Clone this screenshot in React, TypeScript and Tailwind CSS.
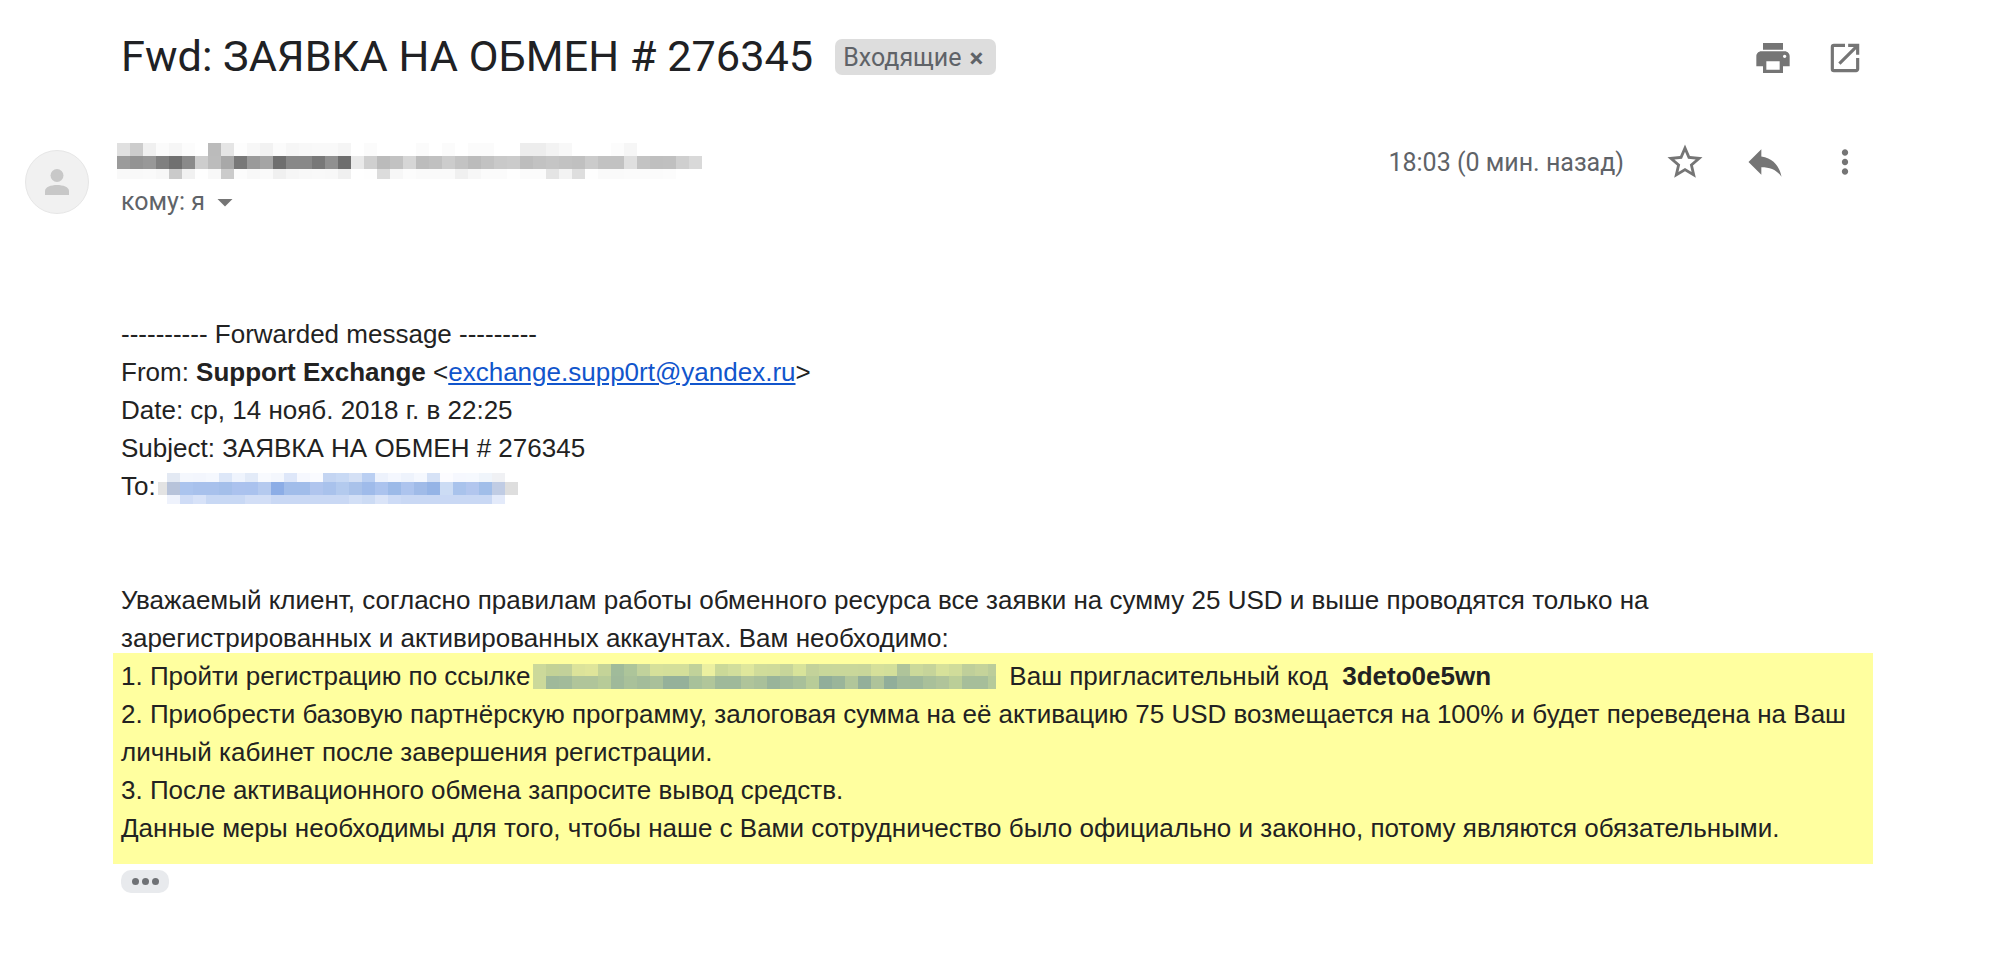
import React from 'react';
import { MdPrint, MdOpenInNew, MdStarBorder, MdReply, MdMoreVert, MdArrowDropDown } from 'react-icons/md';

type PixelRow = { x: number; y: number; h: number; first?: number; colors: string[] };

// mosaic blocks used to hide the addresses in the screenshot
const Mosaic: React.FC<{ w: number; h: number; rows: PixelRow[]; className: string }> = ({ w, h, rows, className }) => (
  <svg width={w} height={h} viewBox={`0 0 ${w} ${h}`} shapeRendering="crispEdges" className={className}>
    {rows.map((row, r) =>
      row.colors.map((c, i) => {
        const first = row.first ?? 13;
        const x = i === 0 ? row.x : row.x + first + (i - 1) * 13;
        return <rect key={`${r}-${i}`} x={x} y={row.y} width={i === 0 ? first : 13} height={row.h} fill={c} />;
      })
    )}
  </svg>
);

const grey = (list: string) => list.split(',').map(v => `#${v}${v}${v}`);

const senderRows: PixelRow[] = [
  { x: 0, y: 0, h: 13, colors: grey('e0,cc,f0,fb,f6,fc,ff,bb,e5,fd,f7,f2,fb,f6,f8,f9,f9,f5,ff,fb,ff,ff,ff,fb,ff,fb,ff,fb,fb,ff,ff,ed,ed,f3,f8,ff,ff,ff,fc,f6,ff,ff,ff,ff') },
  { x: 0, y: 13, h: 13, colors: grey('9b,93,98,80,70,8a,cd,bc,a8,78,9a,a5,6f,88,88,78,90,6e,e9,cf,bb,c2,d6,bc,c0,cc,c3,bb,c2,c9,cb,bd,c2,c5,c2,c0,cb,c2,c2,df,c3,bf,c0,cf,d9') },
  { x: 0, y: 26, h: 10, colors: grey('f9,f9,fa,f7,ca,f1,fe,f8,cb,fc,f8,fa,f0,f6,f8,f9,f8,f0,ff,fe,dc,f7,fc,fa,fa,fa,f0,f7,fb,fb,fe,fb,fb,e4,f3,de,fe,fa,fa,fb,fb,fb,fc,ff') },
];

const toRows: PixelRow[] = [
  { x: 9, y: 0, h: 9, colors: ['#e3e9f3', '#f4f7fd', '#f3f6fd', '#f5f8fe', '#dde7f8', '#eff4fd', '#e3ebf8', '#f8fafe', '#f4f7fd', '#dee7f9', '#f6f8fe', '#fafbff', '#c4d5f2', '#c8d9f4', '#d4e0f5', '#bacff2', '#edf2fc', '#f4f7fe', '#eef3fc', '#f5f8fe', '#d6e2f6', '#fcfcff', '#f6f8fe', '#f6f9fe', '#f0f5fb', '#f0f1f4'] },
  { x: 0, y: 9, h: 13, first: 9, colors: ['#e3e3e3', '#b7c3da', '#abc4ee', '#a8c1ec', '#a8c1ec', '#a4bfea', '#abc2ee', '#aac2ee', '#b5caef', '#8cade6', '#a1bdea', '#a1bdea', '#b0c5ee', '#a9c2ec', '#b3caee', '#a9c2ea', '#9fbbea', '#abc3ee', '#9cbae8', '#adc4ee', '#a0bbe8', '#95b4e6', '#ccdcf4', '#a9c3ec', '#b2c6ee', '#a1bee9', '#c0cce4', '#dedede'] },
  { x: 9, y: 22, h: 9, colors: ['#eef2fc', '#cfdcf6', '#d7e2f8', '#c8d8f4', '#c8d8f4', '#c8d8f4', '#d2def6', '#d2def6', '#c9d8f4', '#c9d8f4', '#c9d8f4', '#c9d8f4', '#c9d8f4', '#c9d8f4', '#d2dff6', '#ccdbf4', '#dae4f8', '#cddbf6', '#c9d8f4', '#c9d8f4', '#c9d8f4', '#c9d8f4', '#c9d8f4', '#c9d8f4', '#c9d8f4', '#e3eafa'] },
];

const linkRows: PixelRow[] = [
  { x: 0, y: 0, h: 12, colors: ['#ccd99a', '#c3d296', '#c2d19a', '#dce39a', '#dfe59a', '#c4d398', '#a0bb9a', '#adc59a', '#c1d29c', '#d6e09a', '#d4df9a', '#d4df9a', '#c1d29a', '#ecf0a0', '#cbd998', '#d2de9c', '#dfe79c', '#d0dc9a', '#cfdb9a', '#c7d59a', '#d8e39a', '#c3d29a', '#c8d79a', '#c9d79a', '#c9d79a', '#c8d69a', '#d6e09a', '#d3df9a', '#afc49a', '#cbd99a', '#c6d49a', '#d7e19a', '#d0dc9a', '#bfcf9a', '#c5d39a', '#bccd9a'] },
  { x: 0, y: 12, h: 13, colors: ['#ccd99a', '#9fb99a', '#a2bb9a', '#b0c59a', '#b0c59a', '#b7cb98', '#9fb99a', '#a9c19a', '#a3bc9a', '#a9c09a', '#95b19a', '#95b19a', '#a8c19a', '#b1c69a', '#9fb99a', '#9fb99a', '#afc49a', '#a9c09a', '#99b49a', '#a1ba9a', '#a8c09a', '#b8cc98', '#91ae9a', '#9ab59a', '#b1c69a', '#93af9a', '#aec39a', '#91ae9a', '#a0b99a', '#9eb89a', '#a9c09a', '#b0c49a', '#bbce98', '#a6be9a', '#a6be9a', '#b5ca9a'] },
];

const App: React.FC = () => {
  return (
    <div className="w-[2000px] min-h-screen bg-white text-[#222222] font-['Liberation_Sans',Arial,sans-serif]">
      {/* Subject */}
      <div className="flex items-center h-[114px] pl-[121px] pr-[115px]">
        <h1 className="text-[43.3px] leading-[56px] font-normal text-[#202124] font-['Roboto',sans-serif]">Fwd: ЗАЯВКА НА ОБМЕН # 276345</h1>
        <span className="ml-[22px] flex items-center h-[36px] w-[161px] pl-[8px] pt-[1px] rounded-[7px] bg-[#dddddd] text-[#5f6368] text-[25px] font-['Roboto',sans-serif]">
          Входящие
          <span className="ml-[8px] text-[26px] leading-none font-bold">×</span>
        </span>
        <div className="ml-auto flex items-center gap-[33px] pr-[21px] mt-[1px] text-[#757575]">
          <MdPrint className="w-[40px] h-[40px]" />
          <MdOpenInNew className="w-[38px] h-[38px]" />
        </div>
      </div>

      {/* Sender */}
      <div className="flex items-start pt-[29px] h-[201px]">
        <div className="ml-[25px] mt-[7px] w-[64px] h-[64px] rounded-full bg-[#f1f1f1] border border-[#e6e6e6] flex items-center justify-center shrink-0">
          <svg width="24" height="26" viewBox="0 0 24 26" fill="#c8c8c8">
            <circle cx="12" cy="6.5" r="6.5" />
            <path d="M0 26v-4c0-4 6-6 12-6s12 2 12 6v4z" />
          </svg>
        </div>
        <div className="ml-[28px] flex-1">
          <div className="flex items-center h-[36px]">
            <Mosaic w={585} h={36} rows={senderRows} className="block" />
            <div className="ml-auto mt-[2px] flex items-center pr-[115px] text-[#757575]">
              <span className="text-[25px] mt-[2px] text-[#5f6368] font-['Roboto',sans-serif] mr-[21px]">18:03 (0 мин. назад)</span>
              <span className="w-[80px] flex justify-center"><MdStarBorder className="w-[42px] h-[42px]" /></span>
              <span className="w-[80px] flex justify-center"><MdReply className="w-[44px] h-[44px]" /></span>
              <span className="w-[80px] flex justify-center"><MdMoreVert className="w-[38px] h-[38px]" /></span>
            </div>
          </div>
          <div className="flex items-center ml-[4px] mt-[4px] text-[25px] text-[#5f6368] font-['Roboto',sans-serif]">
            кому: я
            <MdArrowDropDown className="ml-[2px] w-[36px] h-[36px] text-[#757575]" />
          </div>
        </div>
      </div>

      {/* Message body */}
      <div className="text-[26px] leading-[38px]">
        <div className="pl-[121px]">
          <div>---------- Forwarded message ---------</div>
          <div>From: <b>Support Exchange</b> &lt;<a className="text-[#1155cc] underline">exchange.supp0rt@yandex.ru</a>&gt;</div>
          <div>Date: ср, 14 нояб. 2018 г. в 22:25</div>
          <div>Subject: ЗАЯВКА НА ОБМЕН # 276345</div>
          <div className="flex items-center">
            To:
            <Mosaic w={360} h={31} rows={toRows} className="ml-[2px] mt-[5px] block" />
          </div>
          <div className="h-[76px]" />
          <div>Уважаемый клиент, согласно правилам работы обменного ресурса все заявки на сумму 25 USD и выше проводятся только на</div>
          <div>зарегистрированных и активированных аккаунтах. Вам необходимо:</div>
        </div>
        <div className="ml-[113px] mt-[-4px] w-[1760px] pl-[8px] pr-[8px] pt-[4px] pb-[17px] bg-[#ffff9f] text-[#222222]">
          <div className="flex items-center whitespace-pre">
            1. Пройти регистрацию по ссылке
            <Mosaic w={463} h={25} rows={linkRows} className="ml-[3px] mt-[1px] block" />
            <span className="ml-[13px]">Ваш пригласительный код  <b>3deto0e5wn</b></span>
          </div>
          <div>2. Приобрести базовую партнёрскую программу, залоговая сумма на её активацию 75 USD возмещается на 100% и будет переведена на Ваш личный кабинет после завершения регистрации.</div>
          <div>3. После активационного обмена запросите вывод средств.</div>
          <div>Данные меры необходимы для того, чтобы наше с Вами сотрудничество было официально и законно, потому являются обязательными.</div>
        </div>
        <div className="ml-[121px] mt-[6px] w-[48px] h-[23px] rounded-[10px] bg-[#e8eaed] flex items-center justify-center gap-[3px]">
          <span className="w-[7px] h-[7px] rounded-full bg-[#6f7175]" />
          <span className="w-[7px] h-[7px] rounded-full bg-[#6f7175]" />
          <span className="w-[7px] h-[7px] rounded-full bg-[#6f7175]" />
        </div>
      </div>
    </div>
  );
};

export default App;
